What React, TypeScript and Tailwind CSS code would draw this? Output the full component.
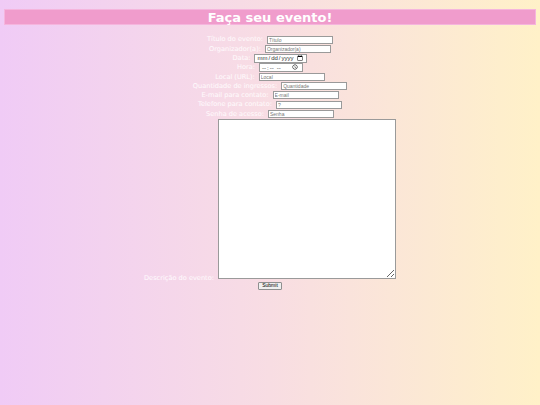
import React from "react";

const rows = [
  { label: "Título do evento:", type: "text", ph: "Título", w: "w-[66px]" },
  { label: "Organizador(a):", type: "text", ph: "Organizador(a)", w: "w-[66px]" },
  { label: "Data:", type: "date", ph: "", w: "w-[53px]" },
  { label: "Hora:", type: "time", ph: "", w: "w-[44px]" },
  { label: "Local (URL):", type: "text", ph: "Local", w: "w-[66px]" },
  { label: "Quantidade de ingressos:", type: "text", ph: "Quantidade", w: "w-[66px]" },
  { label: "E-mail para contato:", type: "text", ph: "E-mail", w: "w-[66px]" },
  { label: "Telefone para contato:", type: "text", ph: "?", w: "w-[66px]" },
  { label: "Senha de acesso:", type: "text", ph: "Senha", w: "w-[66px]" },
];

export default function App() {
  return (
    <div className="min-h-[405px] w-full bg-gradient-to-r from-[#f0cbf6] via-[#f8dde3] to-[#fff1c8] font-['DejaVu_Sans',sans-serif] overflow-hidden">
      <div className="pt-[9px] px-[4px]">
        <h1 className="h-[16px] bg-[#f09ccc] border border-[#f5b5dd] flex items-center justify-center text-white font-bold text-[13px] leading-none">
          Faça seu evento!
        </h1>
      </div>

      <form className="mt-[10px] flex flex-col items-center">
        {rows.map((r) => (
          <div key={r.label} className="h-[9.3px] flex items-center justify-center gap-[4px]">
            <label className="text-white/90 text-[6.6px] leading-none">{r.label}</label>
            <input
              type={r.type}
              placeholder={r.ph || undefined}
              className={`${r.w} ${r.type === "text" ? "h-[8px] text-[5px]" : "h-[9px] text-[6px]"} bg-white border border-[#9a9a9a] px-[1px] leading-none font-['Liberation_Sans',sans-serif] text-[#333] placeholder:text-[#777] outline-none`}
            />
          </div>
        ))}

        <div className="flex items-end justify-center gap-[4px]">
          <label className="text-white/90 text-[6.6px] leading-none -mb-[3px]">Descrição do evento:</label>
          <textarea className="w-[178px] h-[160px] bg-white border border-[#9a9a9a] outline-none" />
        </div>

        <button
          type="button"
          className="mt-[3px] h-[8px] px-[3px] bg-[#efefef] border border-[#8f8f8f] rounded-[1px] text-[5px] leading-none font-['Liberation_Sans',sans-serif] text-black"
        >
          Submit
        </button>
      </form>
    </div>
  );
}
